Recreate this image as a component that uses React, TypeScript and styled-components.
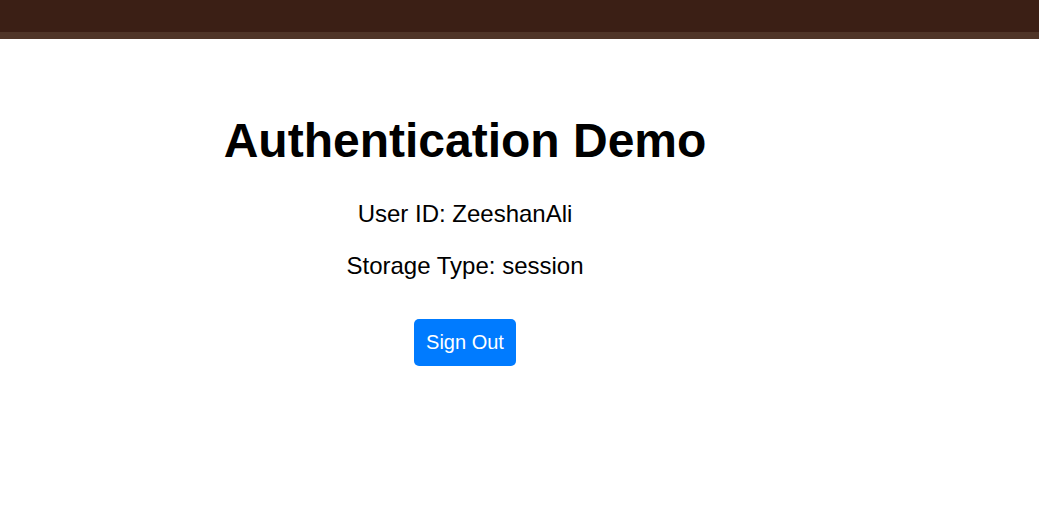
import styled, { createGlobalStyle } from "styled-components"

const GlobalStyle = createGlobalStyle`
    html, body {
        margin: 0;
        padding: 0;
        background: #ffffff;
        font-family: "Liberation Sans", Arial, sans-serif;
        color: #000000;
    }
`

const TopBar = styled.header`
    height: 32px;
    background: #3b1f15;
    border-bottom: 7px solid #4f3528;
`

const Main = styled.main`
    width: 930px;
    padding-top: 74px;
    display: flex;
    flex-direction: column;
    align-items: center;
    text-align: center;
`

const Title = styled.h1`
    margin: 0 0 32.4px;
    font-size: 48px;
    font-weight: 700;
    line-height: normal;
`

const Info = styled.p<{ $gap: number }>`
    margin: 0 0 ${(p) => p.$gap}px;
    font-size: 24px;
    line-height: normal;
`

const Button = styled.button`
    padding: 12px;
    border: none;
    border-radius: 5px;
    background: #007bff;
    color: #ffffff;
    font-family: "Liberation Sans", Arial, sans-serif;
    font-size: 20px;
    line-height: normal;
    cursor: pointer;
`

const App = () => {
    return <>
        <GlobalStyle />
        <TopBar />
        <Main>
            <Title>Authentication Demo</Title>
            <Info $gap={24}>User ID: ZeeshanAli</Info>
            <Info $gap={39}>Storage Type: session</Info>
            <Button>Sign Out</Button>
        </Main>
    </>
}

export default App
